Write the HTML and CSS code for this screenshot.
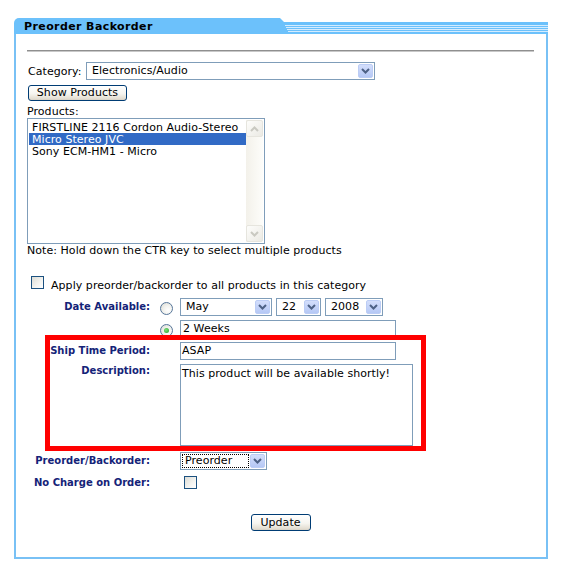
FILE: index.html
```html
<!DOCTYPE html>
<html>
<head>
<meta charset="utf-8">
<title>Preorder Backorder</title>
<link rel="stylesheet" href="styles.css">
</head>
<body>
<div class="page">
  <div class="panel">
    <div class="header">
      <div class="tab">Preorder Backorder</div>
      <div class="stripes">
        <svg width="264" height="12" viewBox="0 0 264 12">
          <rect x="1" y="3" width="263" height="1" fill="#d4ecff"/>
          <rect x="2" y="5" width="262" height="1" fill="#d4ecff"/>
          <rect x="3" y="7" width="261" height="1" fill="#d4ecff"/>
          <rect x="4" y="9" width="260" height="1" fill="#d4ecff"/>
        </svg>
      </div>
    </div>
    <div class="body">
      <div class="rule"></div>
      <div class="cat-row">
        <span class="cat-label">Category:</span>
        <div class="select w-cat">
          <span class="sel-val">Electronics/Audio</span>
          <span class="sel-btn"><svg width="9" height="6" viewBox="0 0 9 6"><path d="M1 1l3.5 3.5L8 1" fill="none" stroke="#4d6185" stroke-width="2"/></svg></span>
        </div>
      </div>
      <div class="xpbtn show-btn">Show Products</div>
      <div class="products-label">Products:</div>
      <div class="listbox">
        <div class="items">
          <div class="item">FIRSTLINE 2116 Cordon Audio-Stereo</div>
          <div class="item sel">Micro Stereo JVC</div>
          <div class="item">Sony ECM-HM1 - Micro</div>
        </div>
        <div class="scroll">
          <div class="sbtn"><svg width="9" height="6" viewBox="0 0 9 6"><path d="M1 5l3.5-3.5L8 5" fill="none" stroke="#c9c9c1" stroke-width="2"/></svg></div>
          <div class="sbtn"><svg width="9" height="6" viewBox="0 0 9 6"><path d="M1 1l3.5 3.5L8 1" fill="none" stroke="#c9c9c1" stroke-width="2"/></svg></div>
        </div>
      </div>
      <div class="note">Note: Hold down the CTR key to select multiple products</div>
      <div class="apply-row">
        <span class="checkbox"></span>
        <span class="apply-text">Apply preorder/backorder to all products in this category</span>
      </div>

      <div class="frow r-date">
        <div class="flabel">Date Available:</div>
        <div class="fradio"><span class="radio"></span></div>
        <div class="fctrl date-ctrls">
          <div class="select w-month">
            <span class="sel-val">May</span>
            <span class="sel-btn"><svg width="9" height="6" viewBox="0 0 9 6"><path d="M1 1l3.5 3.5L8 1" fill="none" stroke="#4d6185" stroke-width="2"/></svg></span>
          </div>
          <div class="select w-day">
            <span class="sel-val">22</span>
            <span class="sel-btn"><svg width="9" height="6" viewBox="0 0 9 6"><path d="M1 1l3.5 3.5L8 1" fill="none" stroke="#4d6185" stroke-width="2"/></svg></span>
          </div>
          <div class="select w-year">
            <span class="sel-val">2008</span>
            <span class="sel-btn"><svg width="9" height="6" viewBox="0 0 9 6"><path d="M1 1l3.5 3.5L8 1" fill="none" stroke="#4d6185" stroke-width="2"/></svg></span>
          </div>
        </div>
      </div>
      <div class="frow r-weeks">
        <div class="flabel"></div>
        <div class="fradio"><span class="radio checked"></span></div>
        <div class="fctrl"><div class="textbox w-text pad2">2 Weeks</div></div>
      </div>
      <div class="frow r-ship">
        <div class="flabel">Ship Time Period:</div>
        <div class="fradio"></div>
        <div class="fctrl"><div class="textbox w-text">ASAP</div></div>
      </div>
      <div class="frow r-desc">
        <div class="flabel top">Description:</div>
        <div class="fradio"></div>
        <div class="fctrl"><div class="textarea">This product will be available shortly!</div></div>
      </div>
      <div class="frow r-pre">
        <div class="flabel">Preorder/Backorder:</div>
        <div class="fradio"></div>
        <div class="fctrl">
          <div class="select w-pre">
            <span class="sel-val focus">Preorder</span>
            <span class="sel-btn"><svg width="9" height="6" viewBox="0 0 9 6"><path d="M1 1l3.5 3.5L8 1" fill="none" stroke="#4d6185" stroke-width="2"/></svg></span>
          </div>
        </div>
      </div>
      <div class="frow r-nc">
        <div class="flabel">No Charge on Order:</div>
        <div class="fradio"></div>
        <div class="fctrl"><span class="checkbox nc"></span></div>
      </div>

      <div class="update-row"><div class="xpbtn update-btn">Update</div></div>
    </div>
    <div class="redbox"></div>
  </div>
</div>
</body>
</html>
```
FILE: styles.css
```css
* { box-sizing: border-box; }
body {
  margin: 0;
  font-family: "DejaVu Sans", Verdana, sans-serif;
  font-size: 11px;
  letter-spacing: 0.05px;
  color: #000;
  background: #fff;
}
.page { padding: 18px 0 0 14px; }
.panel { position: relative; width: 534px; }

.header { display: flex; height: 16px; }
.tab {
  width: 270px;
  background: #6cc1fb;
  border-top-left-radius: 5px;
  clip-path: polygon(0 0, 266px 0, 270px 4px, 270px 100%, 0 100%);
  font-weight: bold;
  font-size: 11px;
  letter-spacing: 0.4px;
  line-height: 15px;
  padding: 1px 0 0 10px;
  white-space: nowrap;
}
.stripes {
  flex: 1;
  margin-top: 4px;
  height: 12px;
  background: #6cc1fb;
  overflow: hidden;
}
.stripes svg { display: block; }

.body {
  border: 2px solid #79c1f5;
  border-top: none;
  padding: 16px 12px 26px 11px;
}
.rule {
  height: 2px;
  border-top: 1px solid #8f8f8f;
  border-bottom: 1px solid #c8c8c8;
}

.cat-row { display: flex; align-items: center; margin-top: 10px; }
.cat-label { width: 59px; padding-left: 1px; }

.select {
  display: flex;
  align-items: stretch;
  height: 18px;
  border: 1px solid #7f9db9;
  padding: 1px;
  background: #fff;
}
.sel-val { flex: 1; padding-left: 4px; line-height: 14px; white-space: nowrap; }
.sel-btn {
  width: 15px;
  display: flex;
  align-items: center;
  justify-content: center;
  background: linear-gradient(#d3defb, #b5c8f5);
  border: 1px solid #bccdf5;
  border-radius: 2px;
}
.sel-btn svg { display: block; }
.w-cat { width: 289px; }
.w-month { width: 92px; }
.w-day { width: 45px; }
.w-year { width: 58px; }
.w-pre { width: 87px; }
.sel-val.focus {
  padding-left: 2px;
  border: 1px dotted #000;
  line-height: 12px;
  margin-right: 1px;
}

.xpbtn {
  border: 1px solid #003c74;
  border-radius: 3px;
  background: linear-gradient(#ffffff 0%, #f6f5f0 55%, #e3ded2 90%, #d6d0c5 100%);
  text-align: center;
  font-size: 11px;
}
.show-btn {
  width: 99px;
  height: 16px;
  line-height: 14px;
  margin: 5px 0 0 1px;
}
.products-label { margin-top: 4px; line-height: 13px; }

.listbox {
  width: 238px;
  height: 126px;
  border: 1px solid #7f9db9;
  padding: 1px;
  display: flex;
}
.items { flex: 1; padding-top: 1px; }
.item { height: 12px; line-height: 13px; padding-left: 3px; white-space: nowrap; }
.item.sel { background: #316ac5; color: #fff; }
.scroll {
  width: 17px;
  display: flex;
  flex-direction: column;
  justify-content: space-between;
  background: linear-gradient(90deg, #f3f1ea, #fdfdfa);
}
.sbtn {
  height: 17px;
  border: 1px solid #e6e5de;
  border-radius: 2px;
  background: linear-gradient(135deg, #fdfdfb, #ebeae4);
  display: flex;
  align-items: center;
  justify-content: center;
}
.sbtn svg { display: block; }

.note { line-height: 13px; white-space: nowrap; }

.apply-row { display: flex; align-items: flex-start; margin-top: 19px; height: 16px; }
.checkbox {
  display: block;
  width: 13px;
  height: 13px;
  border: 1px solid #1c5180;
  background: linear-gradient(135deg, #dcdcd5 0%, #f4f4f1 60%, #ffffff 100%);
}
.apply-row .checkbox { margin-left: 4px; }
.apply-text { margin-left: 7px; padding-top: 3px; line-height: 13px; white-space: nowrap; }

.frow { display: flex; align-items: center; }
.flabel {
  width: 123px;
  text-align: right;
  font-weight: bold;
  font-size: 10px;
  letter-spacing: 0;
  color: #142378;
  line-height: 18px;
  white-space: nowrap;
  align-self: stretch;
}
.flabel.top { line-height: 14px; }
.fradio { width: 30px; padding-left: 10px; display: flex; align-items: center; align-self: stretch; }
.fctrl { display: flex; align-items: center; }
.date-ctrls { gap: 4px; }

.r-date { margin-top: 6px; height: 18px; }
.r-weeks { margin-top: 4px; height: 18px; }
.r-ship { margin-top: 4px; height: 18px; }
.r-desc { margin-top: 4px; height: 82px; align-items: flex-start; }
.r-pre { margin-top: 6px; height: 18px; }
.r-nc { margin-top: 6px; height: 13px; }
.r-nc .flabel { line-height: 13px; }

.radio {
  display: block;
  width: 13px;
  height: 13px;
  border-radius: 50%;
  border: 1px solid #56769a;
  background: radial-gradient(circle at 65% 65%, #ffffff 0%, #f2f2ee 45%, #d8d8d0 100%);
  position: relative;
}
.r-date .radio { margin-top: 3px; }
.r-weeks .radio { margin-top: 3px; }
.radio.checked::after {
  content: "";
  position: absolute;
  left: 3px;
  top: 3px;
  width: 5px;
  height: 5px;
  border-radius: 50%;
  background: radial-gradient(circle at 40% 40%, #7fe07f, #21a121);
}

.textbox {
  height: 18px;
  border: 1px solid #7f9db9;
  line-height: 16px;
  padding-left: 1px;
  white-space: nowrap;
  background: #fff;
}
.textbox.pad2 { padding-left: 2px; }
.w-text { width: 216px; }
.textarea {
  width: 233px;
  height: 82px;
  border: 1px solid #7f9db9;
  padding: 2px 1px;
  line-height: 14px;
  background: #fff;
}
.nc { margin-left: 4px; }

.update-row { margin-top: 25px; display: flex; justify-content: center; }
.update-btn { width: 60px; height: 17px; line-height: 15px; }

.redbox {
  position: absolute;
  left: 31px;
  top: 317px;
  width: 381px;
  height: 116px;
  border: 5px solid #ff0000;
  pointer-events: none;
}
```
